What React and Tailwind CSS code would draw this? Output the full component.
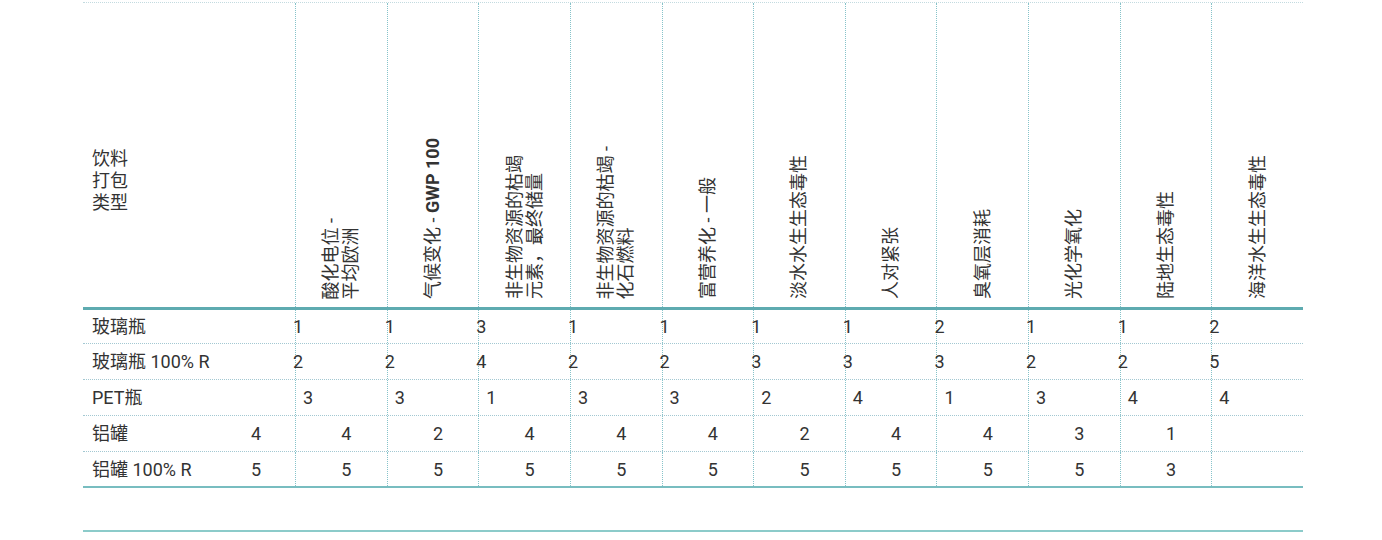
const headers = [
  { lines: ['酸化电位 -', '平均欧洲'] },
  { lines: [['气候变化 - ', 'GWP 100']] },
  { lines: ['非生物资源的枯竭', '元素，最终储量'] },
  { lines: ['非生物资源的枯竭 -', '化石燃料'] },
  { lines: ['富营养化 - 一般'] },
  { lines: ['淡水水生生态毒性'] },
  { lines: ['人对紧张'] },
  { lines: ['臭氧层消耗'] },
  { lines: ['光化学氧化'] },
  { lines: ['陆地生态毒性'] },
  { lines: ['海洋水生生态毒性'] },
];

// style: a = flush left on the dotted line, b = small indent, c = centered
const rows = [
  { label: '玻璃瓶', style: 'a', h: 'h-[34px]', vals: ['1', '1', '3', '1', '1', '1', '1', '2', '1', '1', '2'] },
  { label: '玻璃瓶 100% R', style: 'a', h: 'h-[36px]', vals: ['2', '2', '4', '2', '2', '3', '3', '3', '2', '2', '5'] },
  { label: 'PET瓶', style: 'b', h: 'h-[36px]', vals: ['3', '3', '1', '3', '3', '2', '4', '1', '3', '4', '4'] },
  { label: '铝罐', first: '4', style: 'c', h: 'h-[36px]', vals: ['4', '2', '4', '4', '4', '2', '4', '4', '3', '1', ''] },
  { label: '铝罐 100% R', first: '5', style: 'c', h: 'h-[36px]', vals: ['5', '5', '5', '5', '5', '5', '5', '5', '5', '3', ''], last: true },
];

const cellStyle = {
  a: 'flex items-center justify-start',
  b: 'flex items-center justify-start pl-[7px]',
  c: 'flex items-center justify-center pl-[10px]',
};

const gridCols = 'grid grid-cols-[212px_repeat(11,minmax(0,1fr))]';
const vline = 'border-l border-dotted border-[#86c3ca]';

function HeaderCell({ lines }) {
  return (
    <div className={`${vline} flex items-end justify-center pb-[8px]`}>
      <div className="[writing-mode:vertical-rl] [text-orientation:sideways] rotate-180 text-[18px] leading-[20px] whitespace-nowrap">
        {lines.map((line, i) => (
          <div key={i}>
            {Array.isArray(line) ? (
              <>
                {line[0]}
                <span className="font-bold">{line[1]}</span>
              </>
            ) : (
              line
            )}
          </div>
        ))}
      </div>
    </div>
  );
}

export default function App() {
  return (
    <div className="w-full h-[540px] bg-white pt-[2px] text-[#333] font-[family-name:Roboto,'Noto_Sans_CJK_SC',sans-serif] overflow-hidden">
      <div className="ml-[83px] w-[1220px]">
        {/* Header */}
        <div className="border-t border-dotted border-[#c3dbe0]" />
        <div className={`${gridCols} h-[304px]`}>
          <div className="flex flex-col justify-end pl-[9px] pb-[93px] text-[18px] leading-[22px]">
            <div>饮料</div>
            <div>打包</div>
            <div>类型</div>
          </div>
          {headers.map((h, i) => (
            <HeaderCell key={i} lines={h.lines} />
          ))}
        </div>
        <div className="h-[3px] bg-[#5eabb0]" />

        {/* Body */}
        {rows.map((row, ri) => (
          <div
            key={ri}
            className={`${gridCols} ${row.h} text-[18px] ${
              row.last ? 'border-b-2 border-solid border-[#78bdc0]' : 'border-b border-dotted border-[#a3c8d2]'
            }`}
          >
            <div className="flex items-center pl-[9px]">
              <span className="flex-1">{row.label}</span>
              {row.first && <span className="w-[88px] pl-[10px] text-center">{row.first}</span>}
            </div>
            {row.vals.map((v, ci) => (
              <div key={ci} className={`${vline} ${cellStyle[row.style]}`}>
                <span className={row.style === 'a' ? '-ml-[3px]' : ''}>{v}</span>
              </div>
            ))}
          </div>
        ))}

        <div className="h-[44px] border-b-2 border-[#8ccbca]" />
      </div>
    </div>
  );
}
